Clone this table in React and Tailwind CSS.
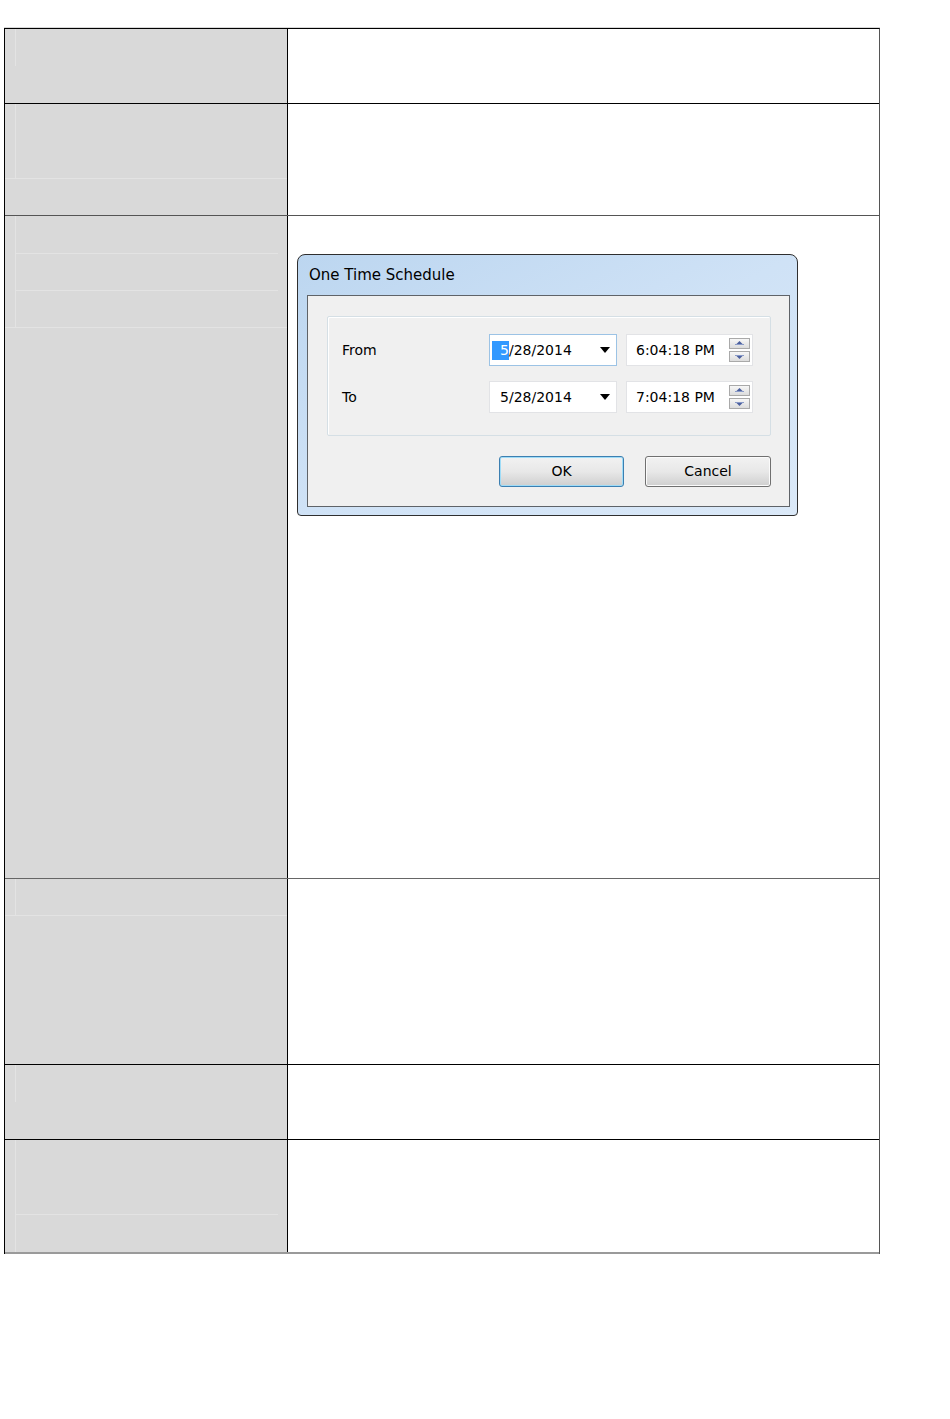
const FONT = { fontFamily: '"DejaVu Sans", "Liberation Sans", sans-serif' };

function SpinUp() {
  return (
    <div className="flex h-[11px] w-[21px] items-center justify-center border border-[#a9a9a9] bg-gradient-to-b from-[#f7f7f7] to-[#dcdcdc]">
      <svg width="11" height="5" viewBox="0 0 11 5">
        <polygon points="5.5,0 8.5,3 2.5,3" fill="#4a5f9e" />
        <rect x="1" y="3" width="9" height="1" fill="#8a9bc8" />
      </svg>
    </div>
  );
}

function SpinDown() {
  return (
    <div className="flex h-[11px] w-[21px] items-center justify-center border border-[#a9a9a9] bg-gradient-to-b from-[#f7f7f7] to-[#dcdcdc]">
      <svg width="11" height="5" viewBox="0 0 11 5">
        <rect x="1" y="1" width="9" height="1" fill="#8a9bc8" />
        <polygon points="2.5,2 8.5,2 5.5,5" fill="#4a5f9e" />
      </svg>
    </div>
  );
}

function DateField({ focused, date }) {
  const first = date.slice(0, 1);
  const rest = date.slice(1);
  return (
    <div
      className={
        focused
          ? "flex h-[32px] w-[128px] items-center border border-[#9cc3e5] bg-white pl-[2px] pr-[6px] text-[14px] text-black"
          : "flex h-[32px] w-[128px] items-center border border-[#e2e3e6] bg-white pl-[2px] pr-[6px] text-[14px] text-black"
      }
    >
      {focused ? (
        <span className="bg-[#3399ff] pl-[8px] leading-[19px] text-white">{first}</span>
      ) : (
        <span className="pl-[8px] leading-[19px]">{first}</span>
      )}
      <span className="leading-[19px]">{rest}</span>
      <svg className="ml-auto" width="10" height="6" viewBox="0 0 10 6">
        <polygon points="0,0 10,0 5,6" fill="#000" />
      </svg>
    </div>
  );
}

function TimeField({ time }) {
  return (
    <div className="ml-[9px] flex h-[32px] w-[127px] items-start border border-[#e2e3e6] bg-white text-[14px] text-black">
      <span className="self-center pl-[9px]">{time}</span>
      <div className="ml-auto mr-[2px] mt-[3px] flex flex-col gap-[2px]">
        <SpinUp />
        <SpinDown />
      </div>
    </div>
  );
}

function Dialog() {
  return (
    <div className="flex h-[262px] w-[501px] flex-col rounded-t-[8px] rounded-b-[4px] border border-[#2f2f2f] bg-gradient-to-br from-[#bcd6f0] via-[#cfe2f6] to-[#dbe9f8] pb-[8px] pl-[9px] pr-[7px]">
      <div className="flex h-[40px] items-center pl-[2px] text-[15px] text-black">One Time Schedule</div>
      <div className="flex-1 border border-[#5f6368] bg-[#f0f0f0] pl-[19px] pr-[18px] pt-[20px]">
        <div className="h-[120px] rounded-[2px] border border-[#d5dfe5] bg-[#f0f0f0] pl-[14px] pr-[16px] pt-[17px] shadow-[inset_1px_1px_0_#ffffff]">
          <div className="flex flex-col gap-[15px]">
            <div className="flex items-center">
              <div className="w-[147px] text-[14px] text-black">From</div>
              <DateField focused date="5/28/2014" />
              <TimeField time="6:04:18 PM" />
            </div>
            <div className="flex items-center">
              <div className="w-[147px] text-[14px] text-black">To</div>
              <DateField date="5/28/2014" />
              <TimeField time="7:04:18 PM" />
            </div>
          </div>
        </div>
        <div className="mt-[20px] flex justify-end gap-[21px]">
          <div className="flex h-[31px] w-[125px] items-center justify-center rounded-[3px] border border-[#3c7fb1] bg-gradient-to-b from-[#f2f2f2] via-[#e8e8e8] to-[#cfcfcf] text-[14px] text-black shadow-[inset_0_0_0_1px_#9fdcf7]">
            OK
          </div>
          <div className="flex h-[31px] w-[126px] items-center justify-center rounded-[3px] border border-[#707070] bg-gradient-to-b from-[#f2f2f2] via-[#e8e8e8] to-[#cfcfcf] text-[14px] text-black shadow-[inset_0_0_0_1px_#fbfbfb]">
            Cancel
          </div>
        </div>
      </div>
    </div>
  );
}

export default function App() {
  return (
    <div className="min-h-[1419px] w-[950px] bg-white pl-[4px] pt-[27px]" style={FONT}>
      <div className="w-[876px] border-t border-[#d8d8d8]">
        <div className="border-l border-r border-t border-l-black border-r-[#555555] border-t-black">
          {/* Row 1 */}
          <div className="flex h-[75px] border-b border-black">
            <div className="w-[283px] shrink-0 border-r border-black bg-[#d9d9d9]">
              <div className="ml-[10px] h-[37px] border-l border-[#e3e3e3]" />
            </div>
            <div className="flex-1 bg-white" />
          </div>
          {/* Row 2 */}
          <div className="flex h-[112px] border-b border-[#555555]">
            <div className="w-[283px] shrink-0 border-r border-black bg-[#d9d9d9]">
              <div className="h-[75px] border-b border-[#e3e3e3]">
                <div className="ml-[10px] h-full border-l border-[#e3e3e3]" />
              </div>
            </div>
            <div className="flex-1 bg-white" />
          </div>
          {/* Row 3 */}
          <div className="flex h-[663px] border-b border-[#666666]">
            <div className="w-[283px] shrink-0 border-r border-black bg-[#d9d9d9]">
              <div className="h-[112px] border-b border-[#e3e3e3]">
                <div className="ml-[10px] flex h-full flex-col border-l border-[#e3e3e3]">
                  <div className="mr-[9px] h-[38px] border-b border-[#e3e3e3]" />
                  <div className="mr-[9px] h-[37px] border-b border-[#e3e3e3]" />
                </div>
              </div>
            </div>
            <div className="flex-1 bg-white pl-[9px] pt-[38px]">
              <Dialog />
            </div>
          </div>
          {/* Row 4 */}
          <div className="flex h-[186px] border-b border-black">
            <div className="w-[283px] shrink-0 border-r border-black bg-[#d9d9d9]">
              <div className="h-[37px] border-b border-[#e3e3e3]">
                <div className="ml-[10px] h-full border-l border-[#e3e3e3]" />
              </div>
            </div>
            <div className="flex-1 bg-white" />
          </div>
          {/* Row 5 */}
          <div className="flex h-[75px] border-b border-black">
            <div className="w-[283px] shrink-0 border-r border-black bg-[#d9d9d9]">
              <div className="ml-[10px] h-[37px] border-l border-[#e3e3e3]" />
            </div>
            <div className="flex-1 bg-white" />
          </div>
          {/* Row 6 */}
          <div className="flex h-[114px] border-b-2 border-[#9a9a9a]">
            <div className="w-[283px] shrink-0 border-r border-black bg-[#d9d9d9]">
              <div className="ml-[10px] h-full border-l border-[#e3e3e3]">
                <div className="mr-[9px] h-[75px] border-b border-[#e3e3e3]" />
              </div>
            </div>
            <div className="flex-1 bg-white" />
          </div>
        </div>
      </div>
    </div>
  );
}
